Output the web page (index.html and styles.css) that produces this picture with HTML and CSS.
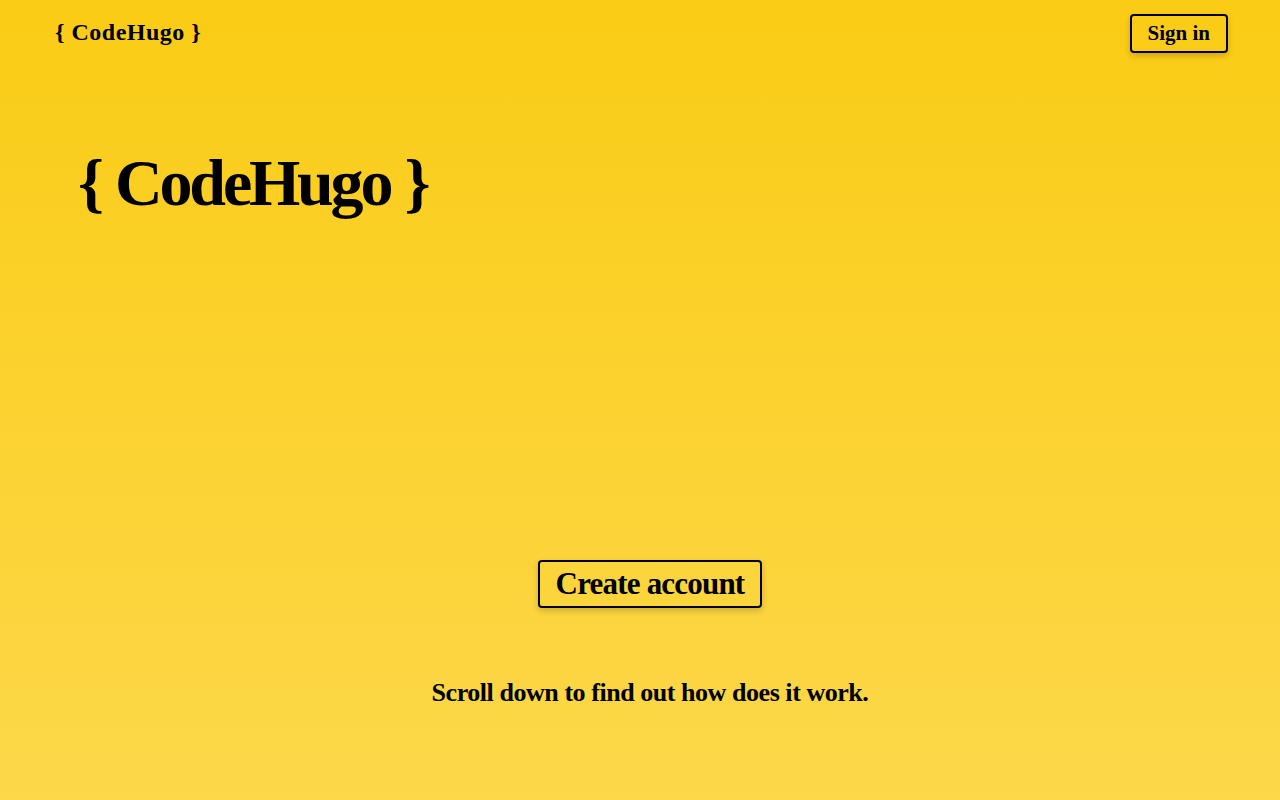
FILE: index.html
```html
<!DOCTYPE html>
<html>
<head>
<meta charset="utf-8">
<link rel="stylesheet" href="styles.css">
</head>
<body>
<div class="page">
  <header class="topbar">
    <div class="brand">{ CodeHugo }</div>
    <button class="btn btn-small">Sign in</button>
  </header>
  <main class="hero">
    <h1 class="hero-title">{ CodeHugo }</h1>
    <div class="hero-actions">
      <button class="btn btn-large">Create account</button>
    </div>
    <p class="hint">Scroll down to find out how does it work.</p>
  </main>
</div>
</body>
</html>
```
FILE: styles.css
```css
html, body {
  margin: 0;
  padding: 0;
}
body {
  font-family: "Liberation Serif", "Times New Roman", serif;
  font-weight: bold;
  color: #000;
}
.page {
  height: 800px;
  background: linear-gradient(180deg, #facc15 0%, #fcd84a 100%);
  display: flex;
  flex-direction: column;
}
.topbar {
  display: flex;
  justify-content: space-between;
  align-items: flex-start;
  padding: 14px 52px 0 55px;
}
.brand {
  font-size: 24px;
  line-height: 37px;
  letter-spacing: 0.5px;
}
.btn {
  font-family: inherit;
  font-weight: bold;
  color: #000;
  background: transparent;
  border: 2px solid #000;
  border-radius: 4px;
  box-shadow: 0 3px 6px rgba(0,0,0,0.18);
  cursor: pointer;
}
.btn-small {
  font-size: 21px;
  height: 39px;
  padding: 0 16px;
}
.btn-large {
  font-size: 31px;
  letter-spacing: -0.8px;
  height: 48px;
  padding: 0 16px;
}
.hero {
  display: flex;
  flex-direction: column;
  padding: 0 58px 0 78px;
}
.hero-title {
  margin: 90px 0 0;
  font-size: 66px;
  line-height: 80px;
  letter-spacing: -3.2px;
  word-spacing: 1px;
}
.hero-actions {
  display: flex;
  justify-content: center;
  margin-top: 337px;
}
.hint {
  margin: 68px 0 0;
  text-align: center;
  font-size: 26px;
  line-height: 34px;
  letter-spacing: -0.45px;
}
```
